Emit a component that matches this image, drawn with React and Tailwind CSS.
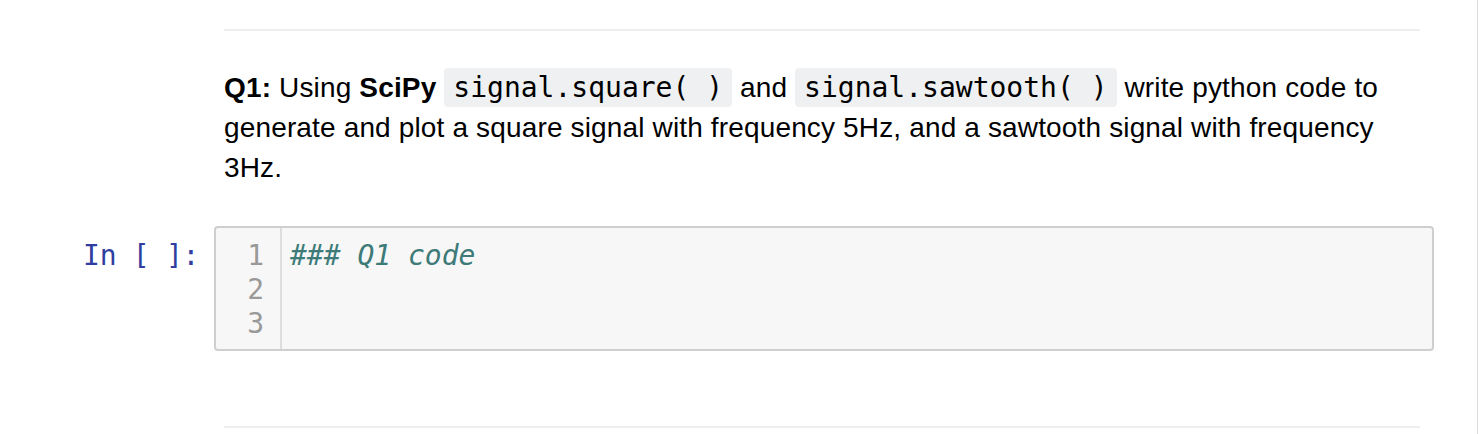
export default function App() {
    const sans = { fontFamily: '"Liberation Sans", Arial, sans-serif' };
    const mono = { fontFamily: '"DejaVu Sans Mono", "Liberation Mono", monospace' };
    return (
        <div className="w-[1478px] h-[434px] bg-white border-r border-[#dcdcdc] overflow-hidden text-black">
            {/* top rule */}
            <div className="pt-[29px] pl-[224px] pr-[57px]">
                <div className="h-[2px] bg-[#eeeeee]" />
            </div>

            {/* Markdown cell */}
            <div className="pl-[224px] pr-[57px] pt-[37px]">
                <p className="text-[28px] leading-[40px] tracking-[0.15px]" style={sans}>
                    <b>Q1:</b> Using <b>SciPy</b>{' '}
                    <code className="bg-[#eff0f1] rounded-[4px] px-[9px] py-[3px] text-[28px] tracking-normal" style={mono}>signal.square( )</code>{' '}
                    and{' '}
                    <code className="bg-[#eff0f1] rounded-[4px] px-[9px] py-[3px] text-[28px] tracking-normal" style={mono}>signal.sawtooth( )</code>{' '}
                    write python code to generate and plot a square signal with frequency 5Hz, and a sawtooth signal with frequency 3Hz.
                </p>
            </div>

            {/* Code cell */}
            <div className="flex mt-[38px]">
                <div className="w-[214px] shrink-0 text-right pr-[15px] pt-[13px] text-[28px] leading-[34px] tracking-[-0.3px] text-[#303f9f]" style={mono}>
                    In&nbsp;[&nbsp;]:
                </div>
                <div className="w-[1220px] h-[125px] border-2 border-[#cfcfcf] rounded-[4px] bg-[#f7f7f7] flex text-[28px] leading-[34px]" style={mono}>
                    <div className="w-[66px] border-r-2 border-[#dddddd] text-right pr-[16px] pt-[11px] text-[#999999]">
                        <div>1</div>
                        <div>2</div>
                        <div>3</div>
                    </div>
                    <div className="pl-[8px] pt-[11px] italic text-[#3d7a78]">### Q1 code</div>
                </div>
            </div>

            {/* bottom rule */}
            <div className="pt-[75px] pl-[224px] pr-[57px]">
                <div className="h-[2px] bg-[#eeeeee]" />
            </div>
        </div>
    )
}
